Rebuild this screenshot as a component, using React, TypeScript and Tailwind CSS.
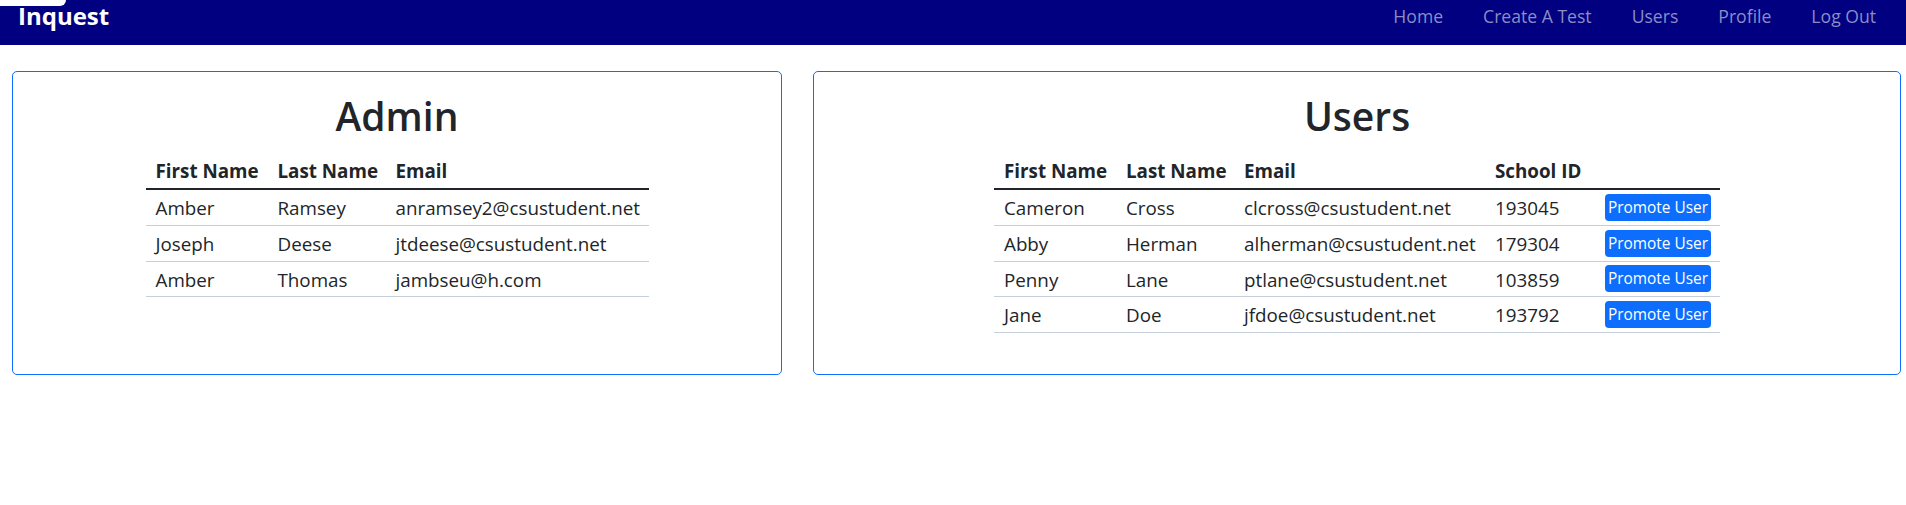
import React from "react";

const admins = [
  { first: "Amber", last: "Ramsey", email: "anramsey2@csustudent.net" },
  { first: "Joseph", last: "Deese", email: "jtdeese@csustudent.net" },
  { first: "Amber", last: "Thomas", email: "jambseu@h.com" },
];

const users = [
  { first: "Cameron", last: "Cross", email: "clcross@csustudent.net", id: "193045" },
  { first: "Abby", last: "Herman", email: "alherman@csustudent.net", id: "179304" },
  { first: "Penny", last: "Lane", email: "ptlane@csustudent.net", id: "103859" },
  { first: "Jane", last: "Doe", email: "jfdoe@csustudent.net", id: "193792" },
];

const links = ["Home", "Create A Test", "Users", "Profile", "Log Out"];

const th = "text-left font-bold px-[10px] py-1 border-b-2 border-[#212529] whitespace-nowrap";
const td = "px-[10px] pt-[5px] pb-[3px] border-b border-[#c5cfdc] whitespace-nowrap";

export default function App() {
  return (
    <div className="min-h-screen bg-white text-[#212529] font-['Open_Sans','Noto_Sans',sans-serif]">
      {/* Navbar */}
      <nav className="relative h-[45px] bg-[#000080] flex items-start justify-between">
        <div className="absolute left-0 top-0 w-[66px] h-[6px] bg-white rounded-br-[6px]" />
        <a className="pl-[18px] pt-[4px] text-[24px] font-bold leading-none text-white">Inquest</a>
        <ul className="flex gap-[40px] pr-[30px] pt-[8px] text-[17.6px] leading-none text-[#8c8cc6]">
          {links.map((l) => (
            <li key={l}>{l}</li>
          ))}
        </ul>
      </nav>

      {/* Cards */}
      <main className="flex items-stretch gap-[31px] pl-3 pr-[5px] pt-[26px]">
        <section className="w-[770px] border border-[#0d6efd] rounded-[5px] pt-[21px] pb-[40px] flex flex-col items-center">
          <h1 className="text-[39px] font-semibold leading-[1.2] mb-[14px]">Admin</h1>
          <table className="table-fixed w-[503px] text-[18.8px] leading-[26.6px] border-collapse">
            <thead>
              <tr>
                <th className={`${th} w-[122px]`}>First Name</th>
                <th className={`${th} w-[118px]`}>Last Name</th>
                <th className={th}>Email</th>
              </tr>
            </thead>
            <tbody>
              {admins.map((a, i) => (
                <tr key={i}>
                  <td className={td}>{a.first}</td>
                  <td className={td}>{a.last}</td>
                  <td className={td}>{a.email}</td>
                </tr>
              ))}
            </tbody>
          </table>
        </section>

        <section className="flex-1 border border-[#0d6efd] rounded-[5px] pt-[21px] pb-[41px] flex flex-col items-center">
          <h1 className="text-[39px] font-semibold leading-[1.2] mb-[14px]">Users</h1>
          <table className="table-fixed w-[726px] text-[18.8px] leading-[26.6px] border-collapse">
            <thead>
              <tr>
                <th className={`${th} w-[122px]`}>First Name</th>
                <th className={`${th} w-[118px]`}>Last Name</th>
                <th className={`${th} w-[251px]`}>Email</th>
                <th className={`${th} w-[110px]`}>School ID</th>
                <th className={th}></th>
              </tr>
            </thead>
            <tbody>
              {users.map((u, i) => (
                <tr key={i}>
                  <td className={td}>{u.first}</td>
                  <td className={td}>{u.last}</td>
                  <td className={td}>{u.email}</td>
                  <td className={td}>{u.id}</td>
                  <td className="px-[10px] py-0 border-b border-[#c5cfdc] align-middle">
                    <button className="block h-[27px] w-[106px] rounded-[4px] bg-[#0d6efd] text-white text-[15.4px] leading-none">
                      Promote User
                    </button>
                  </td>
                </tr>
              ))}
            </tbody>
          </table>
        </section>
      </main>
    </div>
  );
}
